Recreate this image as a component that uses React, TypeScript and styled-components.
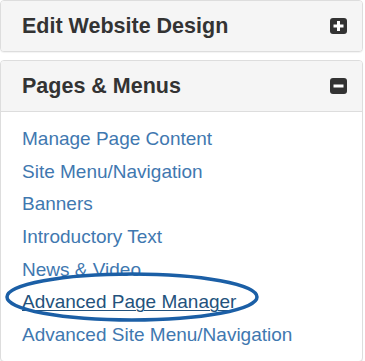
import React from "react";
import styled, { createGlobalStyle } from "styled-components";

const GlobalStyle = createGlobalStyle`
  html, body {
    margin: 0;
    padding: 0;
    background: #ffffff;
    font-family: "Liberation Sans", Arial, sans-serif;
  }
`;

const Page = styled.div`
  width: 363px;
  display: flex;
  flex-direction: column;
  gap: 8px;
`;

const Panel = styled.div`
  border: 1px solid #dddddd;
  border-radius: 4px;
  background: #ffffff;
  overflow: hidden;
  box-shadow: 0 1px 1px rgba(0, 0, 0, 0.05);
`;

const Header = styled.div<{ open?: boolean }>`
  height: 50px;
  display: flex;
  align-items: center;
  justify-content: space-between;
  padding: 0 15px 0 21px;
  background: #f5f5f5;
  border-bottom: ${p => (p.open ? "1px solid #dddddd" : "none")};
  box-sizing: content-box;
`;

const Title = styled.h3`
  margin: 0;
  font-size: 21.5px;
  font-weight: bold;
  color: #333333;
`;

const Body = styled.ul`
  list-style: none;
  margin: 0;
  padding: 10px 0 10px 21px;
`;

const Item = styled.li`
  position: relative;
  line-height: 33px;
  height: 32.7px;
`;

const NavLink = styled.a<{ active?: boolean }>`
  font-size: 19px;
  color: ${p => (p.active ? "#23527c" : "#3f78b0")};
  text-decoration: ${p => (p.active ? "underline" : "none")};
  text-underline-offset: 2px;
  text-decoration-thickness: 1px;
  cursor: pointer;
`;

// hand-drawn highlight round the active link
const Circle = styled.svg`
  position: absolute;
  left: -19px;
  top: -14px;
  pointer-events: none;
`;

const ToggleIcon = ({ open }: { open?: boolean }) => (
  <svg width="17" height="16" viewBox="0 0 17 16">
    <rect x="0" y="0" width="17" height="16" rx="3" fill="#333333" />
    <rect x="3.5" y="6.5" width="10" height="3" fill="#ffffff" />
    {!open && <rect x="7" y="3" width="3" height="10" fill="#ffffff" />}
  </svg>
);

const links = [
  "Manage Page Content",
  "Site Menu/Navigation",
  "Banners",
  "Introductory Text",
  "News & Video",
  "Advanced Page Manager",
  "Advanced Site Menu/Navigation",
];

const App = () => (
  <>
    <GlobalStyle />
    <Page>
      <Panel>
        <Header>
          <Title>Edit Website Design</Title>
          <ToggleIcon />
        </Header>
      </Panel>
      <Panel>
        <Header open>
          <Title>Pages &amp; Menus</Title>
          <ToggleIcon open />
        </Header>
        <Body>
          {links.map(label => {
            const active = label === "Advanced Page Manager";
            return (
              <Item key={label}>
                <NavLink active={active}>{label}</NavLink>
                {active && (
                  <Circle width="260" height="54" viewBox="0 0 260 54">
                    <ellipse cx="129" cy="26" rx="125" ry="23" fill="none" stroke="#1b5fa6" strokeWidth="3.5" />
                  </Circle>
                )}
              </Item>
            );
          })}
        </Body>
      </Panel>
    </Page>
  </>
);

export default App;
